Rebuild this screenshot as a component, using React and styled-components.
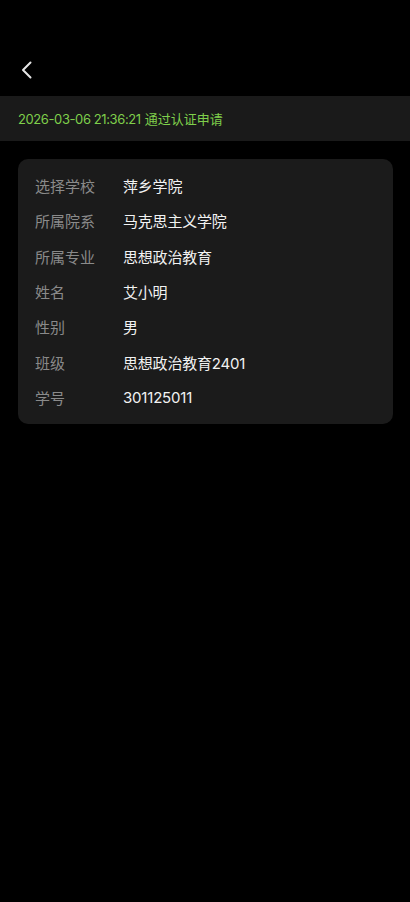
import React from "react";
import styled, { createGlobalStyle } from "styled-components";

const Global = createGlobalStyle`
  html, body { margin: 0; padding: 0; background: #000; }
  body { font-family: "Inter", "Noto Sans CJK SC", sans-serif; }
  #root { min-height: 902px; background: #000; }
`;

const Page = styled.div`
  width: 410px;
  min-height: 902px;
  background: #000;
  display: flex;
  flex-direction: column;
`;

const Header = styled.div`
  height: 96px;
  display: flex;
  align-items: flex-start;
  padding: 61px 0 0 20px;
  box-sizing: border-box;
`;

const BackButton = styled.button`
  background: none;
  border: none;
  padding: 0;
  width: 14px;
  height: 18px;
  display: flex;
  cursor: pointer;
`;

const Banner = styled.div`
  height: 45px;
  background: #1a1a1a;
  display: flex;
  align-items: center;
  padding-left: 18px;
  color: #7fcf4b;
  font-size: 13px;
`;

const Stamp = styled.span`
  letter-spacing: -0.4px;
  margin-right: 4px;
`;

const Card = styled.div`
  margin: 18px 17px 0 18px;
  background: #1b1b1b;
  border-radius: 10px;
  padding: 9px 0;
`;

const Row = styled.div`
  height: 35.3px;
  display: flex;
  align-items: center;
  padding-left: 17px;
  font-size: 15px;
`;

const Label = styled.span`
  width: 88px;
  flex-shrink: 0;
  color: #8a8a8a;
`;

const Value = styled.span`
  color: #f2f2f2;
  letter-spacing: -0.2px;
`;

const rows = [
  ["选择学校", "萍乡学院"],
  ["所属院系", "马克思主义学院"],
  ["所属专业", "思想政治教育"],
  ["姓名", "艾小明"],
  ["性别", "男"],
  ["班级", "思想政治教育2401"],
  ["学号", "301125011"],
];

export default function App() {
  return (
    <>
      <Global />
      <Page>
        <Header>
          <BackButton aria-label="返回">
            <svg width="14" height="18" viewBox="0 0 14 18" fill="none">
              <path d="M10.5 1.5 L3 9 L10.5 16.5" stroke="#e6e6e6" strokeWidth="2" strokeLinecap="round" strokeLinejoin="round" />
            </svg>
          </BackButton>
        </Header>
        <Banner>
          <Stamp>2026-03-06 21:36:21</Stamp>通过认证申请
        </Banner>
        <Card>
          {rows.map(([l, v]) => (
            <Row key={l}>
              <Label>{l}</Label>
              <Value>{v}</Value>
            </Row>
          ))}
        </Card>
      </Page>
    </>
  );
}
